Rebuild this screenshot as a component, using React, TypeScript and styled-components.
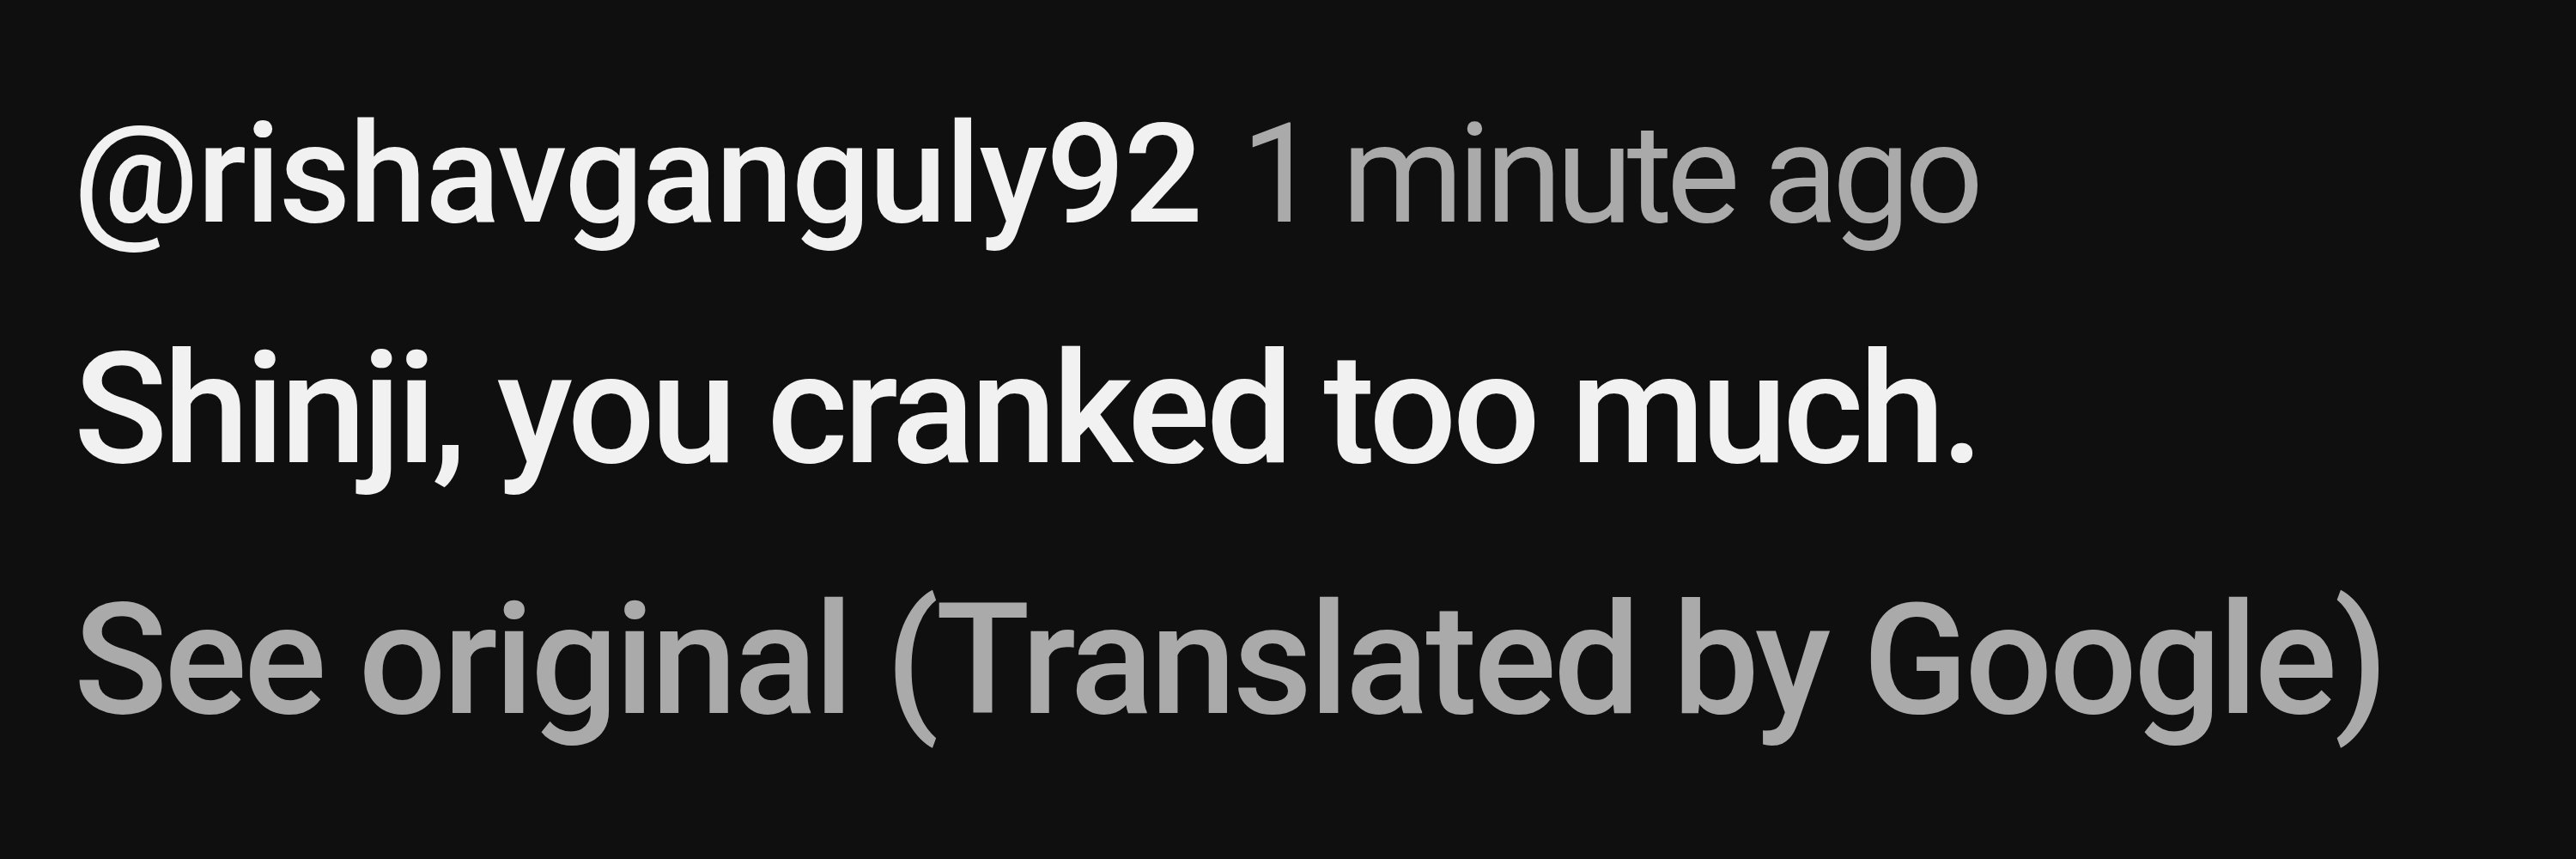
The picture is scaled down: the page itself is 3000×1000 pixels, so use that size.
import { createGlobalStyle } from 'styled-components'
import styled from 'styled-components'

const GlobalStyle = createGlobalStyle`
  html, body {
    margin: 0;
    padding: 0;
    background: #0f0f0f;
  }
  body {
    font-family: Roboto, "Liberation Sans", Arial, sans-serif;
  }
`

const Comment = styled.div`
  width: 3000px;
  height: 1000px;
  box-sizing: border-box;
  padding: 86px 0 0 86px;
  background: #0f0f0f;
  display: flex;
  flex-direction: column;
`

const Header = styled.div`
  display: flex;
  align-items: baseline;
  gap: 46px;
  line-height: 234px;
  font-size: 162px;
`

const Author = styled.span`
  color: #f1f1f1;
  font-weight: 500;
  letter-spacing: -1.6px;
`

const Timestamp = styled.span`
  color: #aaaaaa;
  font-weight: 400;
  letter-spacing: -7px;
`

const Body = styled.div`
  margin-top: 27px;
  font-size: 180px;
  line-height: 260px;
  color: #f1f1f1;
  font-weight: 500;
  letter-spacing: -4.8px;
`

const TranslateLink = styled.div`
  margin-top: 32px;
  font-size: 180px;
  line-height: 260px;
  color: #aaaaaa;
  font-weight: 500;
  letter-spacing: -3.75px;
`

const App = () => {
  return (
    <>
      <GlobalStyle />
      <Comment>
        <Header>
          <Author>@rishavganguly92</Author>
          <Timestamp>1 minute ago</Timestamp>
        </Header>
        <Body>Shinji, you cranked too much.</Body>
        <TranslateLink>See original (Translated by Google)</TranslateLink>
      </Comment>
    </>
  )
}

export default App
